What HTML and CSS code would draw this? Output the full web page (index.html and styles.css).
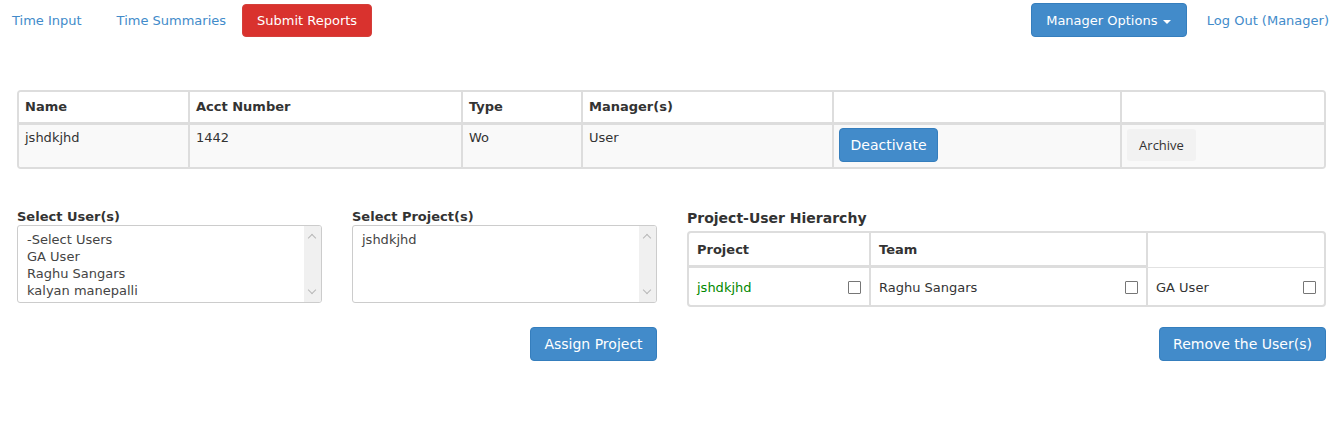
FILE: index.html
```html
<!DOCTYPE html>
<html>
<head>
<meta charset="utf-8">
<link rel="stylesheet" href="styles.css">
</head>
<body>
<nav class="nav">
  <div class="nav-left">
    <a class="nav-link first" href="#">Time Input</a>
    <a class="nav-link second" href="#">Time Summaries</a>
    <a class="btn btn-red" href="#">Submit Reports</a>
  </div>
  <div class="nav-right">
    <a class="btn btn-blue menu-btn" href="#">Manager Options <span class="caret"></span></a>
    <a class="nav-link logout" href="#">Log Out (Manager)</a>
  </div>
</nav>

<div class="acct-wrap">
<table class="acct">
  <colgroup>
    <col style="width:170px"><col style="width:273px"><col style="width:120px"><col style="width:251px"><col style="width:288px"><col>
  </colgroup>
  <thead>
    <tr><th>Name</th><th>Acct Number</th><th>Type</th><th>Manager(s)</th><th></th><th></th></tr>
  </thead>
  <tbody>
    <tr>
      <td>jshdkjhd</td><td>1442</td><td>Wo</td><td>User</td>
      <td class="btn-cell"><a class="btn btn-blue deact" href="#">Deactivate</a></td>
      <td class="btn-cell"><a class="btn-archive" href="#">Archive</a></td>
    </tr>
  </tbody>
</table>
</div>

<section class="assign">
  <div class="col">
    <div class="label">Select User(s)</div>
    <div class="listbox">
      <div class="options">
        <div>-Select Users</div>
        <div>GA User</div>
        <div>Raghu Sangars</div>
        <div>kalyan manepalli</div>
      </div>
      <div class="scroll"><span class="arr up"></span><span class="arr down"></span></div>
    </div>
  </div>
  <div class="col">
    <div class="label">Select Project(s)</div>
    <div class="listbox">
      <div class="options">
        <div>jshdkjhd</div>
      </div>
      <div class="scroll"><span class="arr up"></span><span class="arr down"></span></div>
    </div>
    <a class="btn btn-blue action" href="#">Assign Project</a>
  </div>
  <div class="col">
    <div class="label big">Project-User Hierarchy</div>
    <table class="hier">
      <colgroup><col style="width:180px"><col style="width:277px"><col></colgroup>
      <thead>
        <tr><th>Project</th><th>Team</th><th class="thin"></th></tr>
      </thead>
      <tbody>
        <tr>
          <td><div class="cell"><span class="green">jshdkjhd</span><span class="chk"></span></div></td>
          <td><div class="cell"><span>Raghu Sangars</span><span class="chk"></span></div></td>
          <td><div class="cell"><span>GA User</span><span class="chk"></span></div></td>
        </tr>
      </tbody>
    </table>
    <a class="btn btn-blue action" href="#">Remove the User(s)</a>
  </div>
</section>
</body>
</html>
```

FILE: styles.css
```css
* { box-sizing: border-box; }
body {
  margin: 0;
  font-family: "DejaVu Sans", Verdana, sans-serif;
  font-size: 13px;
  color: #333;
  background: #fff;
}
a { text-decoration: none; }

.nav {
  display: flex;
  justify-content: space-between;
  align-items: center;
  height: 40px;
  padding: 0 11px 0 12px;
}
.nav-left, .nav-right { display: flex; align-items: center; }
.nav-link { color: #428bca; white-space: nowrap; }
.nav-link.second { margin-left: 35px; }
.btn-red { margin-left: 16px; }
.logout { margin-left: 20px; }

.btn {
  display: inline-flex;
  align-items: center;
  justify-content: center;
  height: 34px;
  padding: 0 10px;
  border-radius: 4px;
  color: #fff;
  font-size: 13px;
  border: 1px solid transparent;
  white-space: nowrap;
}
.btn-red { background: #d9322e; border-color: #d43f3a; width: 130px; height: 33px; }
.btn-blue { background: #428bca; border-color: #357ebd; }
.menu-btn { width: 156px; }
.caret {
  display: inline-block;
  width: 0; height: 0;
  margin-left: 6px;
  margin-top: 3px;
  border-top: 4px solid #fff;
  border-left: 4px solid transparent;
  border-right: 4px solid transparent;
}

.acct-wrap {
  margin: 50px 14px 0 17px;
  border: 2px solid #ddd;
  border-radius: 4px;
  overflow: hidden;
}
.acct {
  width: 100%;
  border-collapse: collapse;
  table-layout: fixed;
}
.acct th, .acct td {
  border-left: 2px solid #ddd;
  text-align: left;
  vertical-align: top;
}
.acct th:first-child, .acct td:first-child { border-left: none; }
.acct th {
  height: 31px;
  padding: 0 6px;
  vertical-align: middle;
  font-weight: bold;
  border-bottom: 3px solid #ddd;
  background: #fff;
}
.acct td {
  background: #f9f9f9;
  height: 44px;
  padding: 5px 6px 0 6px;
}
.acct td.btn-cell { padding: 3px 4px 0 5px; }
.deact { width: 99px; height: 34px; font-size: 14px; }
.btn-archive {
  display: inline-flex;
  align-items: center;
  justify-content: center;
  width: 69px;
  height: 32px;
  margin-top: 1px;
  background: #f2f2f2;
  border-radius: 3px;
  color: #333;
  font-family: "Open Sans", "Noto Sans", sans-serif;
  font-size: 13px;
}

.assign {
  display: grid;
  grid-template-columns: 305px 305px 1fr;
  column-gap: 30px;
  padding: 0 14px 0 17px;
  margin-top: 39px;
}
.col { display: flex; flex-direction: column; }
.label { font-weight: bold; height: 17px; line-height: 17px; }
.label.big { font-size: 14px; margin-top: 1px; height: 22px; line-height: 19px; }

.listbox {
  display: flex;
  height: 78px;
  border: 1px solid #ccc;
  border-radius: 3px;
  overflow: hidden;
  background: #fff;
}
.options {
  flex: 1;
  padding: 5px 9px;
  line-height: 17px;
  color: #444;
}
.scroll {
  width: 17px;
  background: #f0f0f0;
  position: relative;
}
.arr {
  position: absolute;
  left: 5px;
  width: 6px; height: 6px;
  border-left: 1px solid #b8b8b8;
  border-top: 1px solid #b8b8b8;
}
.arr.up { top: 9px; transform: rotate(45deg); }
.arr.down { bottom: 9px; transform: rotate(225deg); }

.action { align-self: flex-end; margin-top: 24px; height: 34px; font-size: 14px; }
.col:nth-child(2) .action { width: 127px; }
.col:nth-child(3) .action { width: 167px; margin-top: 20px; }

.hier {
  width: 100%;
  table-layout: fixed;
  border-collapse: separate;
  border-spacing: 0;
  border: 2px solid #ddd;
  border-radius: 4px;
}
.hier th, .hier td {
  border-left: 2px solid #ddd;
  text-align: left;
  padding: 0 8px;
}
.hier th:first-child, .hier td:first-child { border-left: none; }
.hier th {
  height: 35px;
  font-weight: bold;
  border-bottom: 3px solid #ddd;
}
.hier th.thin { border-bottom-width: 1px; border-bottom-color: #e2e2e2; }
.hier td { height: 37px; padding-top: 1px; }
.cell { display: flex; justify-content: space-between; align-items: center; }
.green { color: #080; }
.chk {
  width: 13px; height: 13px;
  border: 1px solid #767676;
  border-radius: 1px;
  background: #fff;
}
```
